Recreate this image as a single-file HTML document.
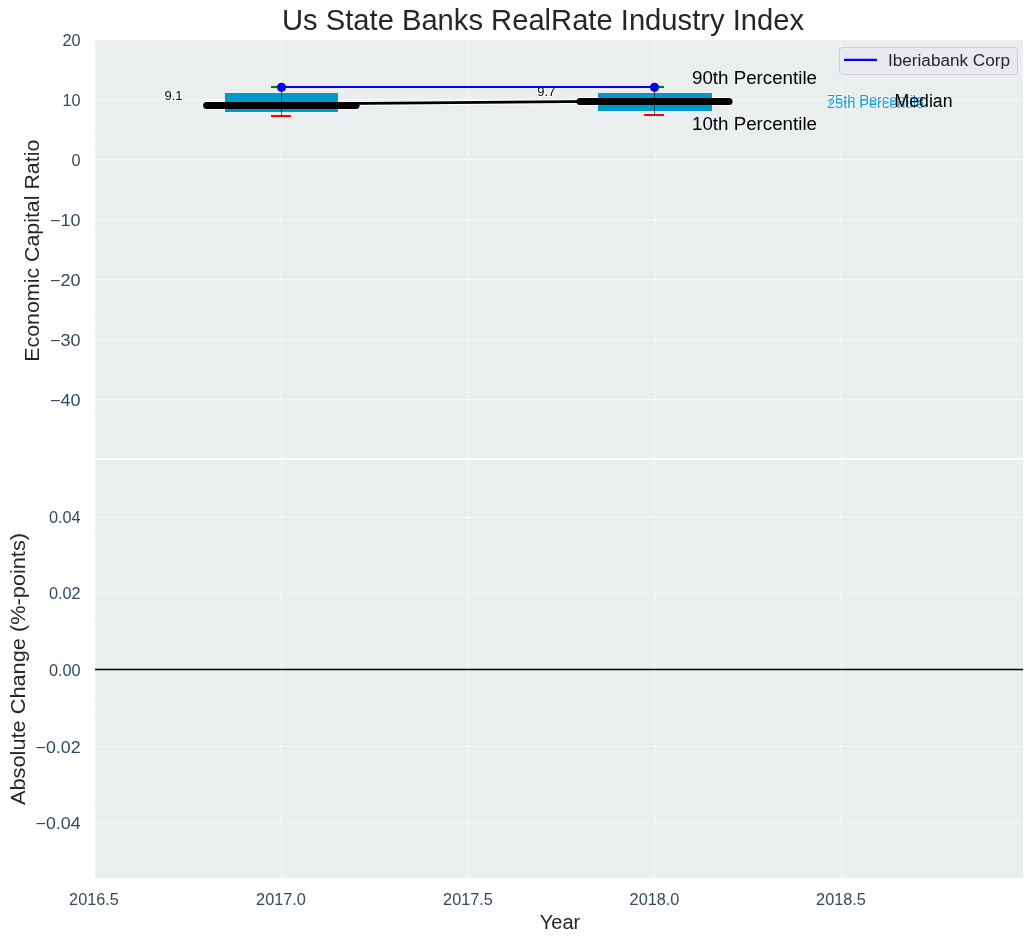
<!DOCTYPE html>
<html><head><meta charset="utf-8">
<style>
html,body{margin:0;padding:0;background:#fff;}
body{width:1034px;height:942px;overflow:hidden;}
#wrap{position:absolute;left:0;top:0;width:1034px;height:942px;will-change:transform;}
svg{display:block;}
text{font-family:"Liberation Sans",sans-serif;}
</style></head>
<body>
<div id="wrap">
<svg width="1034" height="942" viewBox="0 0 1034 942">
<!-- axes backgrounds -->
<rect x="95" y="40" width="928" height="418" fill="#eaeeef"/>
<rect x="95" y="460" width="928" height="418" fill="#eaeeef"/>
<!-- grid -->
<g stroke="#ffffff" stroke-opacity="0.8" stroke-width="1.05" stroke-dasharray="5.14 2.22" fill="none">
<path d="M95 99.5H1023M95 159.5H1023M95 219.5H1023M95 279.5H1023M95 339.5H1023M95 399.5H1023"/>
<path d="M95 517.5H1023M95 593.5H1023M95 746.5H1023M95 822.5H1023"/>
</g>
<svg x="95" y="40" width="928" height="418" overflow="hidden">
<g stroke="#ffffff" stroke-opacity="0.8" stroke-width="1.05" stroke-dasharray="5.14 2.22" fill="none">
<path stroke-opacity="0.3" d="M0.5 419.45V-1"/><path d="M186.5 419.45V-1M373.5 419.45V-1M559.5 419.45V-1M746.5 419.45V-1"/>
</g></svg>
<svg x="95" y="460" width="928" height="418" overflow="hidden">
<g stroke="#ffffff" stroke-opacity="0.8" stroke-width="1.05" stroke-dasharray="5.14 2.22" fill="none">
<path stroke-opacity="0.3" d="M0.5 419.45V-1"/><path d="M186.5 419.45V-1M373.5 419.45V-1M559.5 419.45V-1M746.5 419.45V-1"/>
</g></svg>
<!-- zero line bottom -->
<path d="M95 669.5H1023" stroke="#000" stroke-width="1.3"/>
<!-- y tick labels -->
<g fill="#34495e" font-size="16.3" text-anchor="end">
<text x="80.6" y="45.7">20</text>
<text x="80.6" y="105.7">10</text>
<text x="80.6" y="165.7">0</text>
<text x="80.6" y="225.7" textLength="30.5" lengthAdjust="spacingAndGlyphs">−10</text>
<text x="80.6" y="285.7" textLength="30.5" lengthAdjust="spacingAndGlyphs">−20</text>
<text x="80.6" y="345.7" textLength="30.5" lengthAdjust="spacingAndGlyphs">−30</text>
<text x="80.6" y="405.7" textLength="30.5" lengthAdjust="spacingAndGlyphs">−40</text>
<text x="80.6" y="522.9">0.04</text>
<text x="80.6" y="599.3">0.02</text>
<text x="80.6" y="675.7">0.00</text>
<text x="80.6" y="752.7" textLength="45" lengthAdjust="spacingAndGlyphs">−0.02</text>
<text x="80.6" y="828.6" textLength="45" lengthAdjust="spacingAndGlyphs">−0.04</text>
</g>
<g fill="#34495e" font-size="16.3" text-anchor="middle">
<text x="94" y="905">2016.5</text>
<text x="281" y="905">2017.0</text>
<text x="468" y="905">2017.5</text>
<text x="654.5" y="905">2018.0</text>
<text x="841" y="905">2018.5</text>
</g>
<!-- title and labels -->
<text x="543" y="30" font-size="29" fill="#262626" text-anchor="middle" textLength="522" lengthAdjust="spacingAndGlyphs">Us State Banks RealRate Industry Index</text>
<text x="560" y="929" font-size="20.5" fill="#262626" text-anchor="middle" textLength="40.5" lengthAdjust="spacingAndGlyphs">Year</text>
<text transform="translate(39.2 250.7) rotate(-90)" font-size="20.5" fill="#262626" text-anchor="middle" textLength="222" lengthAdjust="spacingAndGlyphs">Economic Capital Ratio</text>
<text transform="translate(24.8 669) rotate(-90)" font-size="20.5" fill="#262626" text-anchor="middle" textLength="272" lengthAdjust="spacingAndGlyphs">Absolute Change (%-points)</text>

<!-- median connecting line outline -->
<path d="M281.5 104.2L654.5 100.9" stroke="#fff" stroke-opacity="0.75" stroke-width="4.9" fill="none"/>
<!-- white outlines of thick median lines -->
<path d="M206.6 105.5H356.1M579.9 101.4H729.1" stroke="#fff" stroke-width="9" stroke-linecap="round" fill="none"/>
<!-- boxes -->
<rect x="225" y="93" width="113" height="19" fill="#0099cc"/>
<rect x="598" y="93" width="114" height="18" fill="#0099cc"/>
<path d="M281.5 104.2L654.5 100.9" stroke="#000" stroke-width="2.78" fill="none"/>
<path d="M206.6 105.5H356.1M579.9 101.4H729.1" stroke="#000" stroke-width="7" stroke-linecap="round" fill="none"/>
<!-- value labels -->
<text x="173.5" y="99.9" font-size="13" fill="#000" text-anchor="middle" stroke="#fff" stroke-width="2" paint-order="stroke">9.1</text>
<text x="546.4" y="95.9" font-size="13" fill="#000" text-anchor="middle" stroke="#fff" stroke-width="2" paint-order="stroke">9.7</text>
<!-- green caps -->
<path d="M271 87H292M644 87H664" stroke="#008000" stroke-width="2.08"/>
<!-- blue line + dots -->
<path d="M281.5 87H654.5" stroke="#0000ff" stroke-width="2.08"/>
<circle cx="281.5" cy="87.3" r="4.6" fill="#0000ff"/>
<circle cx="654.5" cy="87.3" r="4.6" fill="#0000ff"/>
<!-- red caps -->
<path d="M271 116H291M644 115H664" stroke="#ff0000" stroke-width="2.08"/>
<!-- whiskers -->
<path d="M281.5 87V116M654.5 87V115" stroke="#000" stroke-opacity="0.55" stroke-width="1"/>

<!-- percentile labels -->
<g font-size="17.6" fill="#000">
<text x="692" y="84.1" textLength="125" lengthAdjust="spacingAndGlyphs">90th Percentile</text>
<text x="692" y="129.7" textLength="125" lengthAdjust="spacingAndGlyphs">10th Percentile</text>
</g>
<g font-size="13.5" fill="#1a9bd5" stroke="#fff" stroke-opacity="0.5" stroke-width="1.5" paint-order="stroke">
<text x="827" y="104.4" textLength="97" lengthAdjust="spacingAndGlyphs">75th Percentile</text>
<text x="827" y="107.9" textLength="97" lengthAdjust="spacingAndGlyphs">25th Percentile</text>
</g>
<text x="894.5" y="106.7" font-size="17.6" fill="#000" textLength="58" lengthAdjust="spacingAndGlyphs">Median</text>
<!-- legend -->
<rect x="839.5" y="47.5" width="178" height="27" rx="3" ry="3" fill="#e8e9f0" fill-opacity="0.85" stroke="#cccccc" stroke-width="1"/>
<path d="M844 59.9H877" stroke="#0000ff" stroke-width="2.08"/>
<text x="888" y="66" font-size="16" fill="#262626" textLength="122" lengthAdjust="spacingAndGlyphs">Iberiabank Corp</text>
</svg>
</div>
</body></html>
